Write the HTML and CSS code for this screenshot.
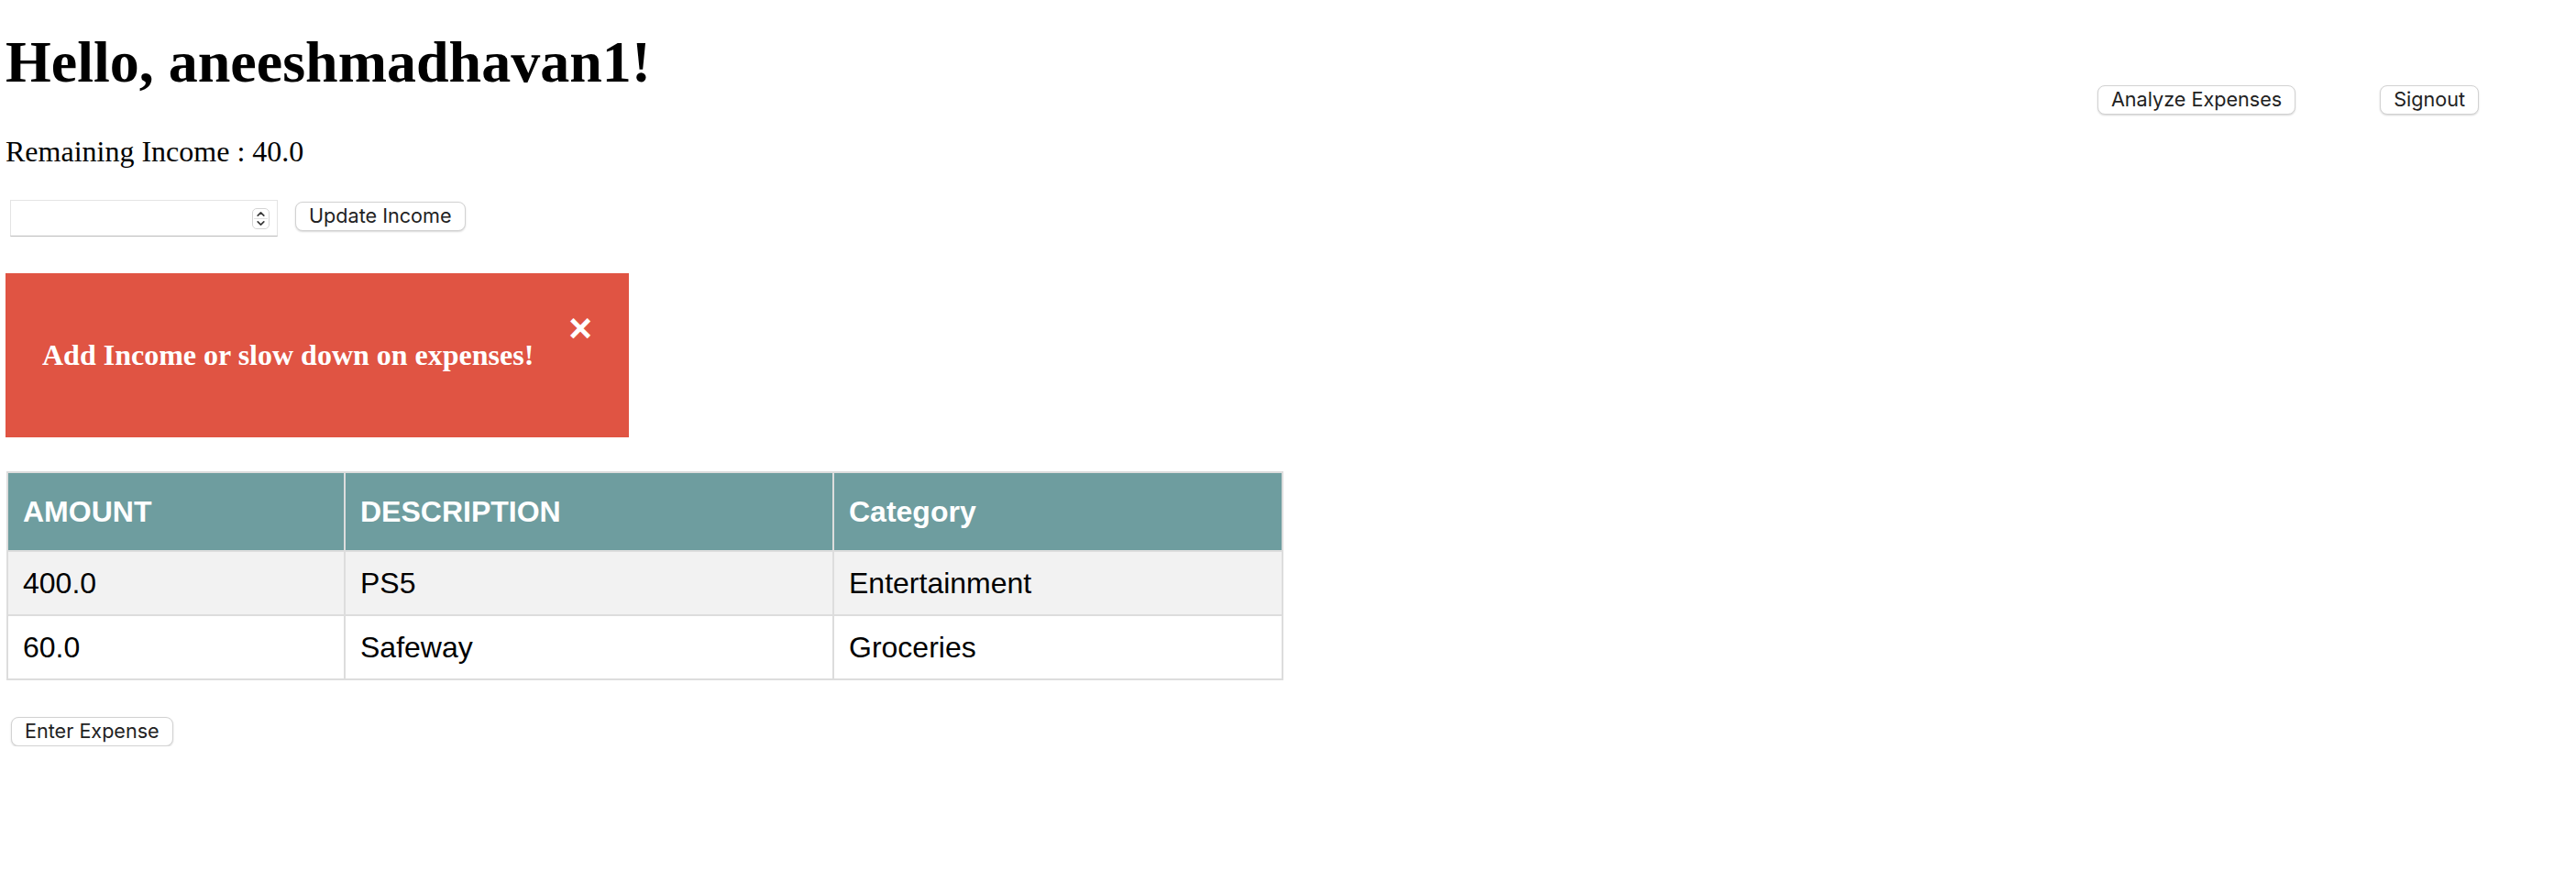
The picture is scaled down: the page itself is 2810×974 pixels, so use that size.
FILE: index.html
```html
<!DOCTYPE html>
<html lang="en">
<head>
<meta charset="utf-8">
<title>Expenses</title>
<link rel="stylesheet" href="styles.css">
</head>
<body>
  <header class="top">
    <h1 class="greeting">Hello, aneeshmadhavan1!</h1>
    <nav class="actions">
      <button class="btn" type="button">Analyze Expenses</button>
      <button class="btn" type="button">Signout</button>
    </nav>
  </header>

  <p class="remaining">Remaining Income : 40.0</p>

  <div class="income-row">
    <div class="field">
      <input class="field-input" type="text" aria-label="Income">
      <svg class="spinner" width="19" height="23" viewBox="0 0 19 23" aria-hidden="true">
        <rect x="0.5" y="0.5" width="18" height="22" rx="4.5" fill="#ffffff" stroke="#d4d4d4"/>
        <line x1="2" y1="11.5" x2="17" y2="11.5" stroke="#e2e2e2"/>
        <path d="M6.2 8.2 L9.5 4.9 L12.8 8.2" fill="none" stroke="#3a3a3a" stroke-width="1.7" stroke-linecap="round" stroke-linejoin="round"/>
        <path d="M6.2 14.8 L9.5 18.1 L12.8 14.8" fill="none" stroke="#3a3a3a" stroke-width="1.7" stroke-linecap="round" stroke-linejoin="round"/>
      </svg>
    </div>
    <button class="btn btn-update" type="button">Update Income</button>
  </div>

  <div class="alert">
    <span class="closebtn">&times;</span>
    <p class="alert-text"><strong>Add Income or slow down on expenses!</strong></p>
  </div>

  <table class="expenses">
    <colgroup>
      <col class="col-amount">
      <col class="col-desc">
      <col class="col-cat">
    </colgroup>
    <thead>
      <tr>
        <th>AMOUNT</th>
        <th>DESCRIPTION</th>
        <th>Category</th>
      </tr>
    </thead>
    <tbody>
      <tr class="row-alt">
        <td>400.0</td>
        <td>PS5</td>
        <td>Entertainment</td>
      </tr>
      <tr>
        <td>60.0</td>
        <td>Safeway</td>
        <td>Groceries</td>
      </tr>
    </tbody>
  </table>

  <button class="btn btn-enter" type="button">Enter Expense</button>
</body>
</html>
```

FILE: styles.css
```css
html, body {
  background: #ffffff;
}

body {
  margin: 0;
  padding: 0 0 0 6px;
  font-family: "Liberation Serif", "Times New Roman", serif;
  color: #000000;
}

.top {
  display: flex;
  align-items: flex-start;
}

.greeting {
  flex: 1;
  margin: 32px 0 45px 0;
  font-size: 64px;
  font-weight: bold;
  line-height: 71px;
}

.actions {
  display: flex;
  gap: 92px;
  margin: 93px 106px 0 0;
}

.btn {
  box-sizing: border-box;
  height: 32px;
  padding: 0 14px;
  margin: 0;
  background: #ffffff;
  color: #222222;
  border: 1px solid #d2d2d2;
  border-radius: 8px;
  box-shadow: 0 1px 2px rgba(0, 0, 0, 0.16);
  font-family: Inter, "Liberation Sans", sans-serif;
  font-size: 21.6px;
  line-height: 1;
  white-space: nowrap;
}

.remaining {
  margin: 0;
  font-size: 32px;
  line-height: 35px;
}

.income-row {
  display: flex;
  align-items: flex-start;
  margin-top: 35px;
}

.field {
  box-sizing: border-box;
  display: flex;
  align-items: center;
  width: 292px;
  height: 40px;
  margin-left: 5px;
  padding: 0 8px 0 4px;
  border: 1px solid #e4e4e4;
  border-bottom: 1px solid #b9b9b9;
  background: #ffffff;
}

.field-input {
  flex: 1;
  min-width: 0;
  height: 100%;
  border: none;
  outline: none;
  padding: 0;
  background: transparent;
  font-size: 26px;
}

.spinner {
  display: block;
  flex: none;
}

.btn-update {
  margin: 2px 0 0 19px;
}

.alert {
  box-sizing: border-box;
  width: 680px;
  margin-top: 40px;
  padding: 40px;
  background: #e05443;
  color: #ffffff;
  display: flow-root;
}

.closebtn {
  float: right;
  margin-left: 30px;
  font-family: "Liberation Sans", Arial, sans-serif;
  font-weight: bold;
  font-size: 44px;
  line-height: 40px;
  color: #ffffff;
}

.alert-text {
  margin: 32px 0;
  font-size: 32px;
  line-height: 35px;
}

.expenses {
  margin-top: 37px;
  margin-left: 1px;
  width: 1391px;
  table-layout: fixed;
  border-collapse: collapse;
  font-family: "Liberation Sans", Arial, Helvetica, sans-serif;
  font-size: 32px;
}

.col-amount { width: 368px; }
.col-desc { width: 533px; }
.col-cat { width: 490px; }

.expenses th,
.expenses td {
  border: 2px solid #dddddd;
  padding: 16px;
  text-align: left;
  line-height: 36px;
}

.expenses th {
  padding-top: 24px;
  padding-bottom: 24px;
  background: #6e9d9f;
  color: #ffffff;
  font-weight: bold;
}

.expenses td {
  color: #000000;
}

.row-alt {
  background: #f2f2f2;
}

.btn-enter {
  display: block;
  margin: 40px 0 0 6px;
}
```
